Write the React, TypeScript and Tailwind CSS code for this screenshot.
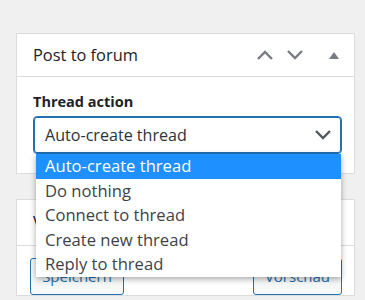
import React from 'react';

const font = { fontFamily: '"Segoe UI", "Open Sans", "Noto Sans", sans-serif' };

function ChevronUp() {
  return (
    <svg width="18" height="12" viewBox="0 0 18 12" className="text-[#787c82]">
      <path d="M2 10 L9 3 L16 10" fill="none" stroke="currentColor" strokeWidth="2.4" />
    </svg>
  );
}

function ChevronDown({ className = 'text-[#787c82]' }: { className?: string }) {
  return (
    <svg width="18" height="12" viewBox="0 0 18 12" className={className}>
      <path d="M2 2 L9 9 L16 2" fill="none" stroke="currentColor" strokeWidth="2.4" />
    </svg>
  );
}

const options = ['Auto-create thread', 'Do nothing', 'Connect to thread', 'Create new thread', 'Reply to thread'];

export default function App() {
  return (
    <div className="w-[365px] h-[300px] overflow-hidden bg-[#f0f0f1] pt-[33px] pl-[16px]" style={font}>
      {/* Post to forum box */}
      <div className="w-[339px] bg-white border border-[#dcdcde]">
        <div className="h-[43px] flex items-center justify-between pl-[16px] pr-[14px] border-b border-[#dcdcde]">
          <h2 className="text-[16.4px] text-[#1d2327] leading-none mt-[1px]">Post to forum</h2>
          <div className="flex items-center">
            <span className="w-[30px] flex justify-center"><ChevronUp /></span>
            <span className="w-[30px] flex justify-center mr-[18px]"><ChevronDown /></span>
            <span className="w-[12px] flex justify-center">
              <svg width="12" height="9" viewBox="0 0 12 9" className="text-[#787c82]">
                <path d="M6 1 L11 8 L1 8 Z" fill="currentColor" />
              </svg>
            </span>
          </div>
        </div>
        <div className="pl-[16px] pr-[12px] pt-[15px] pb-[19px]">
          <div className="text-[14.5px] font-bold text-[#1d2327] leading-[20px] mb-[4px]">Thread action</div>
          <div className="relative">
            <div className="h-[38px] w-[309px] border border-[#2271b1] rounded-[4px] flex items-center justify-between pl-[11px] pr-[9px] shadow-[0_0_0_1px_#2271b1_inset]">
              <span className="text-[16.1px] text-[#2c3338]">Auto-create thread</span>
              <ChevronDown className="text-[#50575e]" />
            </div>
            {/* open dropdown list */}
            <ul className="absolute left-[3px] top-[38px] w-[305px] bg-white shadow-[0_2px_6px_rgba(0,0,0,0.35)] z-10">
              {options.map((o, i) => (
                <li
                  key={o}
                  className={
                    i === 0
                      ? 'h-[24.6px] leading-[24.6px] pl-[9px] text-[16.6px] bg-[#1e90ff] text-white'
                      : 'h-[24.6px] leading-[24.6px] pl-[9px] text-[16.6px] text-[#3c434a]'
                  }
                >
                  {o}
                </li>
              ))}
            </ul>
          </div>
        </div>
      </div>

      {/* Publish box */}
      <div className="w-[339px] mt-[25px] bg-white border border-[#dcdcde]">
        <div className="h-[46px] flex items-center pl-[16px] border-b border-[#dcdcde]">
          <h2 className="text-[16.4px] text-[#1d2327] leading-none">Veröffentlichen</h2>
        </div>
        <div className="flex justify-between pl-[13px] pr-[12px] pt-[12px]">
          <button className="h-[37px] w-[94px] border border-[#2271b1] rounded-[3px] bg-[#f6f7f7] text-[#2271b1] text-[15px]">
            Speichern
          </button>
          <button className="h-[37px] w-[89px] border border-[#2271b1] rounded-[3px] bg-[#f6f7f7] text-[#2271b1] text-[15px]">
            Vorschau
          </button>
        </div>
      </div>
    </div>
  );
}
